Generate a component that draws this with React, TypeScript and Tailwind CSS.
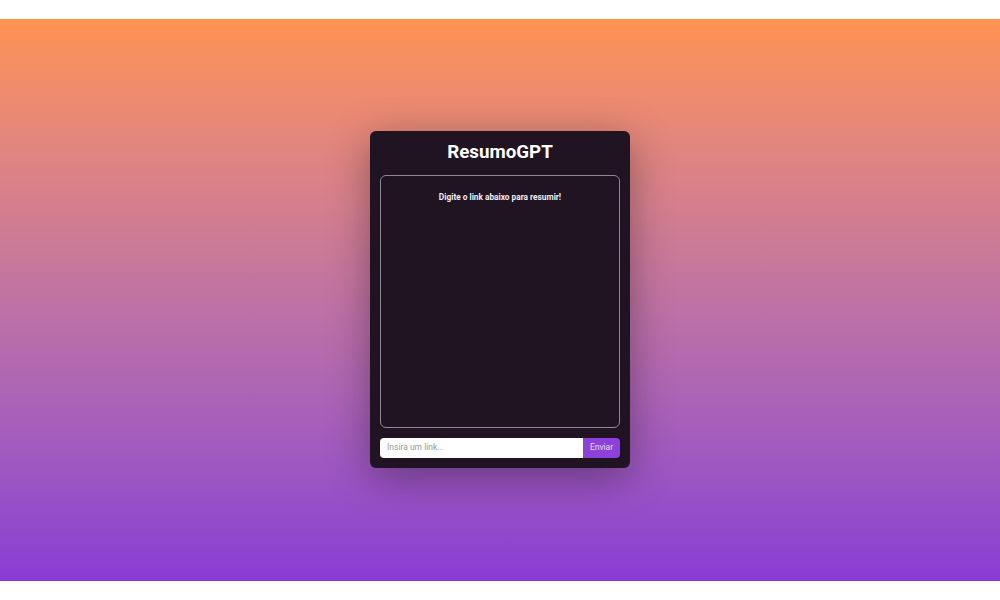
export default function App() {
  return (
    <div className="bg-white py-[19px]" style={{ fontFamily: 'Roboto, "Liberation Sans", sans-serif' }}>
      <div className="h-[562px] pb-[2px] flex items-center justify-center bg-gradient-to-b from-[#ff9350] to-[#8a3bd4]">
        <div className="w-[260px] h-[337px] bg-[#201423] rounded-md shadow-[0_10px_40px_rgba(0,0,0,0.35)] flex flex-col px-[10px] pb-[10px]">
          <h1 className="h-[44px] flex items-center justify-center text-white text-[18.75px] font-bold">
            ResumoGPT
          </h1>
          <div className="flex-1 border border-[#8f8892] rounded-md pt-[15px] text-center">
            <p className="text-[#f1eef2] text-[8.3px] font-bold">Digite o link abaixo para resumir!</p>
          </div>
          <div className="mt-[10px] flex h-[20px]">
            <input
              className="flex-1 min-w-0 bg-white rounded-l-sm px-[7px] text-[8.5px] text-gray-800 placeholder:text-[#9a9a9a] outline-none"
              placeholder="Insira um link..."
            />
            <button className="w-[37px] bg-[#8e40dc] text-[#e8dcf6] text-[8.5px] rounded-r-sm">Enviar</button>
          </div>
        </div>
      </div>
    </div>
  )
}
